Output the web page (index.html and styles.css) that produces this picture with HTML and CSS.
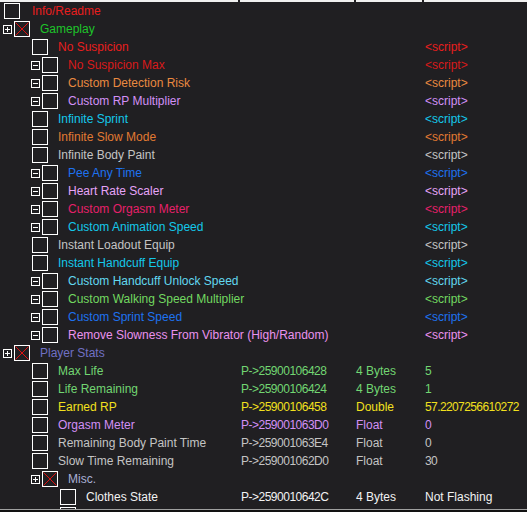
FILE: index.html
```html
<!DOCTYPE html>
<html lang="en">
    <head>
        <meta charset="utf-8" />
        <title>Cheat Table</title>
        <link rel="stylesheet" href="styles.css">
    </head>

    <body>
        <div class="table-view">
            <div class="header">
                <div class="col-name"></div>
                <div class="col-addr"></div>
                <div class="col-type"></div>
                <div class="col-val"></div>
            </div>

            <div class="tree">
                <div class="row red">
                    <div class="name lv0 readme"><span class="cb"></span><span>Info/Readme</span></div>
                    <div></div><div></div><div></div>
                </div>
                <div class="row green">
                    <div class="name lv0 has-exp">
                        <svg class="exp" width="9" height="9"><rect x="0.5" y="0.5" width="8" height="8" fill="none" stroke="#fff"/><path d="M2 4.5h5M4.5 2v5" stroke="#fff"/></svg>
                        <svg class="cb-x" width="16" height="16"><rect x="0.5" y="0.5" width="15" height="15" fill="none" stroke="#fff"/><path d="M1.5 1.5L14.5 14.5M14.5 1.5L1.5 14.5" stroke="#e01010"/></svg>
                        <span>Gameplay</span>
                    </div>
                    <div></div><div></div><div></div>
                </div>

                <div class="row red">
                    <div class="name lv1"><span class="cb"></span><span>No Suspicion</span></div>
                    <div></div><div></div><div class="val">&lt;script&gt;</div>
                </div>
                <div class="row red2">
                    <div class="name lv1 has-exp">
                        <svg class="exp" width="9" height="9"><rect x="0.5" y="0.5" width="8" height="8" fill="none" stroke="#fff"/><path d="M2 4.5h5" stroke="#fff"/></svg>
                        <span class="cb"></span><span>No Suspicion Max</span>
                    </div>
                    <div></div><div></div><div class="val">&lt;script&gt;</div>
                </div>
                <div class="row orange">
                    <div class="name lv1 has-exp">
                        <svg class="exp" width="9" height="9"><rect x="0.5" y="0.5" width="8" height="8" fill="none" stroke="#fff"/><path d="M2 4.5h5" stroke="#fff"/></svg>
                        <span class="cb"></span><span>Custom Detection Risk</span>
                    </div>
                    <div></div><div></div><div class="val">&lt;script&gt;</div>
                </div>
                <div class="row violet">
                    <div class="name lv1 has-exp">
                        <svg class="exp" width="9" height="9"><rect x="0.5" y="0.5" width="8" height="8" fill="none" stroke="#fff"/><path d="M2 4.5h5" stroke="#fff"/></svg>
                        <span class="cb"></span><span>Custom RP Multiplier</span>
                    </div>
                    <div></div><div></div><div class="val">&lt;script&gt;</div>
                </div>
                <div class="row cyan">
                    <div class="name lv1"><span class="cb"></span><span>Infinite Sprint</span></div>
                    <div></div><div></div><div class="val">&lt;script&gt;</div>
                </div>
                <div class="row orange2">
                    <div class="name lv1"><span class="cb"></span><span>Infinite Slow Mode</span></div>
                    <div></div><div></div><div class="val">&lt;script&gt;</div>
                </div>
                <div class="row grey">
                    <div class="name lv1"><span class="cb"></span><span>Infinite Body Paint</span></div>
                    <div></div><div></div><div class="val">&lt;script&gt;</div>
                </div>
                <div class="row blue">
                    <div class="name lv1 has-exp">
                        <svg class="exp" width="9" height="9"><rect x="0.5" y="0.5" width="8" height="8" fill="none" stroke="#fff"/><path d="M2 4.5h5" stroke="#fff"/></svg>
                        <span class="cb"></span><span>Pee Any Time</span>
                    </div>
                    <div></div><div></div><div class="val">&lt;script&gt;</div>
                </div>
                <div class="row pink">
                    <div class="name lv1 has-exp">
                        <svg class="exp" width="9" height="9"><rect x="0.5" y="0.5" width="8" height="8" fill="none" stroke="#fff"/><path d="M2 4.5h5" stroke="#fff"/></svg>
                        <span class="cb"></span><span>Heart Rate Scaler</span>
                    </div>
                    <div></div><div></div><div class="val">&lt;script&gt;</div>
                </div>
                <div class="row crimson">
                    <div class="name lv1 has-exp">
                        <svg class="exp" width="9" height="9"><rect x="0.5" y="0.5" width="8" height="8" fill="none" stroke="#fff"/><path d="M2 4.5h5" stroke="#fff"/></svg>
                        <span class="cb"></span><span>Custom Orgasm Meter</span>
                    </div>
                    <div></div><div></div><div class="val">&lt;script&gt;</div>
                </div>
                <div class="row cyan">
                    <div class="name lv1 has-exp">
                        <svg class="exp" width="9" height="9"><rect x="0.5" y="0.5" width="8" height="8" fill="none" stroke="#fff"/><path d="M2 4.5h5" stroke="#fff"/></svg>
                        <span class="cb"></span><span>Custom Animation Speed</span>
                    </div>
                    <div></div><div></div><div class="val">&lt;script&gt;</div>
                </div>
                <div class="row grey">
                    <div class="name lv1"><span class="cb"></span><span>Instant Loadout Equip</span></div>
                    <div></div><div></div><div class="val">&lt;script&gt;</div>
                </div>
                <div class="row cyan">
                    <div class="name lv1"><span class="cb"></span><span>Instant Handcuff Equip</span></div>
                    <div></div><div></div><div class="val">&lt;script&gt;</div>
                </div>
                <div class="row sky">
                    <div class="name lv1 has-exp">
                        <svg class="exp" width="9" height="9"><rect x="0.5" y="0.5" width="8" height="8" fill="none" stroke="#fff"/><path d="M2 4.5h5" stroke="#fff"/></svg>
                        <span class="cb"></span><span>Custom Handcuff Unlock Speed</span>
                    </div>
                    <div></div><div></div><div class="val">&lt;script&gt;</div>
                </div>
                <div class="row lime">
                    <div class="name lv1 has-exp">
                        <svg class="exp" width="9" height="9"><rect x="0.5" y="0.5" width="8" height="8" fill="none" stroke="#fff"/><path d="M2 4.5h5" stroke="#fff"/></svg>
                        <span class="cb"></span><span>Custom Walking Speed Multiplier</span>
                    </div>
                    <div></div><div></div><div class="val">&lt;script&gt;</div>
                </div>
                <div class="row blue">
                    <div class="name lv1 has-exp">
                        <svg class="exp" width="9" height="9"><rect x="0.5" y="0.5" width="8" height="8" fill="none" stroke="#fff"/><path d="M2 4.5h5" stroke="#fff"/></svg>
                        <span class="cb"></span><span>Custom Sprint Speed</span>
                    </div>
                    <div></div><div></div><div class="val">&lt;script&gt;</div>
                </div>
                <div class="row pink2">
                    <div class="name lv1 has-exp">
                        <svg class="exp" width="9" height="9"><rect x="0.5" y="0.5" width="8" height="8" fill="none" stroke="#fff"/><path d="M2 4.5h5" stroke="#fff"/></svg>
                        <span class="cb"></span><span>Remove Slowness From Vibrator (High/Random)</span>
                    </div>
                    <div></div><div></div><div class="val">&lt;script&gt;</div>
                </div>

                <div class="row slate">
                    <div class="name lv0 has-exp">
                        <svg class="exp" width="9" height="9"><rect x="0.5" y="0.5" width="8" height="8" fill="none" stroke="#fff"/><path d="M2 4.5h5M4.5 2v5" stroke="#fff"/></svg>
                        <svg class="cb-x" width="16" height="16"><rect x="0.5" y="0.5" width="15" height="15" fill="none" stroke="#fff"/><path d="M1.5 1.5L14.5 14.5M14.5 1.5L1.5 14.5" stroke="#e01010"/></svg>
                        <span>Player Stats</span>
                    </div>
                    <div></div><div></div><div></div>
                </div>
                <div class="row mint">
                    <div class="name lv1"><span class="cb"></span><span>Max Life</span></div>
                    <div class="addr">P-&gt;25900106428</div><div class="type">4 Bytes</div><div class="val num">5</div>
                </div>
                <div class="row mint">
                    <div class="name lv1"><span class="cb"></span><span>Life Remaining</span></div>
                    <div class="addr">P-&gt;25900106424</div><div class="type">4 Bytes</div><div class="val num">1</div>
                </div>
                <div class="row yellow">
                    <div class="name lv1"><span class="cb"></span><span>Earned RP</span></div>
                    <div class="addr">P-&gt;25900106458</div><div class="type">Double</div><div class="val num">57.2207256610272</div>
                </div>
                <div class="row violet">
                    <div class="name lv1"><span class="cb"></span><span>Orgasm Meter</span></div>
                    <div class="addr">P-&gt;259001063D0</div><div class="type">Float</div><div class="val num">0</div>
                </div>
                <div class="row grey">
                    <div class="name lv1"><span class="cb"></span><span>Remaining Body Paint Time</span></div>
                    <div class="addr">P-&gt;259001063E4</div><div class="type">Float</div><div class="val num">0</div>
                </div>
                <div class="row grey">
                    <div class="name lv1"><span class="cb"></span><span>Slow Time Remaining</span></div>
                    <div class="addr">P-&gt;259001062D0</div><div class="type">Float</div><div class="val num">30</div>
                </div>
                <div class="row steel">
                    <div class="name lv1 has-exp">
                        <svg class="exp" width="9" height="9"><rect x="0.5" y="0.5" width="8" height="8" fill="none" stroke="#fff"/><path d="M2 4.5h5M4.5 2v5" stroke="#fff"/></svg>
                        <svg class="cb-x" width="16" height="16"><rect x="0.5" y="0.5" width="15" height="15" fill="none" stroke="#fff"/><path d="M1.5 1.5L14.5 14.5M14.5 1.5L1.5 14.5" stroke="#e01010"/></svg>
                        <span>Misc.</span>
                    </div>
                    <div></div><div></div><div></div>
                </div>
                <div class="row white">
                    <div class="name lv2"><span class="cb"></span><span>Clothes State</span></div>
                    <div class="addr">P-&gt;2590010642C</div><div class="type">4 Bytes</div><div class="val">Not Flashing</div>
                </div>
                <div class="row white">
                    <div class="name lv2"><span class="cb"></span><span></span></div>
                    <div></div><div></div><div></div>
                </div>
            </div>

            <div class="hscroll"></div>
        </div>
    </body>
</html>
```

FILE: styles.css
```css
body {
    margin: 0;
    background: #201f22;
    font-family: "Liberation Sans", Arial, sans-serif;
    font-size: 12px;
}

.table-view {
    height: 512px;
    overflow: hidden;
}

/* only the bottom edge of the column header is visible */
.header {
    display: grid;
    grid-template-columns: 240px 116px 68px 1fr;
    height: 2px;
}

.header div {
    background: #f0f0f0;
    border-right: 2px solid #201f22;
}

.header .col-val {
    border-right: none;
}

.tree {
    height: 507px;
    overflow: hidden;
}

.row {
    display: grid;
    grid-template-columns: 240px 116px 68px 1fr;
    height: 18px;
    line-height: 18px;
    white-space: nowrap;
}

.name {
    display: flex;
    align-items: center;
}

.name.lv0 { padding-left: 4px; }
.name.lv1 { padding-left: 32px; }
.name.lv2 { padding-left: 60px; }

.name.lv0.has-exp { padding-left: 3px; }
.name.lv1.has-exp { padding-left: 31px; }

.name.readme span:last-child {
    margin-left: 2px;
}

.exp {
    flex: none;
    margin-right: 2px;
}

.cb {
    flex: none;
    width: 16px;
    height: 16px;
    box-sizing: border-box;
    border: 1px solid #fff;
    margin-right: 10px;
}

.cb-x {
    flex: none;
    margin-right: 10px;
}

.addr {
    padding-left: 1px;
    letter-spacing: -0.5px;
}

.val {
    padding-left: 1px;
}

.val.num {
    letter-spacing: -0.6px;
}

.hscroll {
    height: 2px;
    border-top: 1px solid #a0a0a0;
    background: #121212;
}

/* row colours, as set per entry in the table */
.red { color: #e81e1e; }
.red2 { color: #d81a1a; }
.green { color: #1ec42a; }
.orange { color: #ea8a40; }
.orange2 { color: #e27a32; }
.violet { color: #d290f6; }
.cyan { color: #14c8ea; }
.grey { color: #c4c4c4; }
.blue { color: #1e72f0; }
.pink { color: #e6a4f8; }
.crimson { color: #e6206a; }
.sky { color: #62d8f0; }
.lime { color: #72d860; }
.pink2 { color: #ea92ee; }
.slate { color: #7070c4; }
.mint { color: #72d672; }
.yellow { color: #f2e01e; }
.steel { color: #a8b0d6; }
.white { color: #f2f2f2; }
```
